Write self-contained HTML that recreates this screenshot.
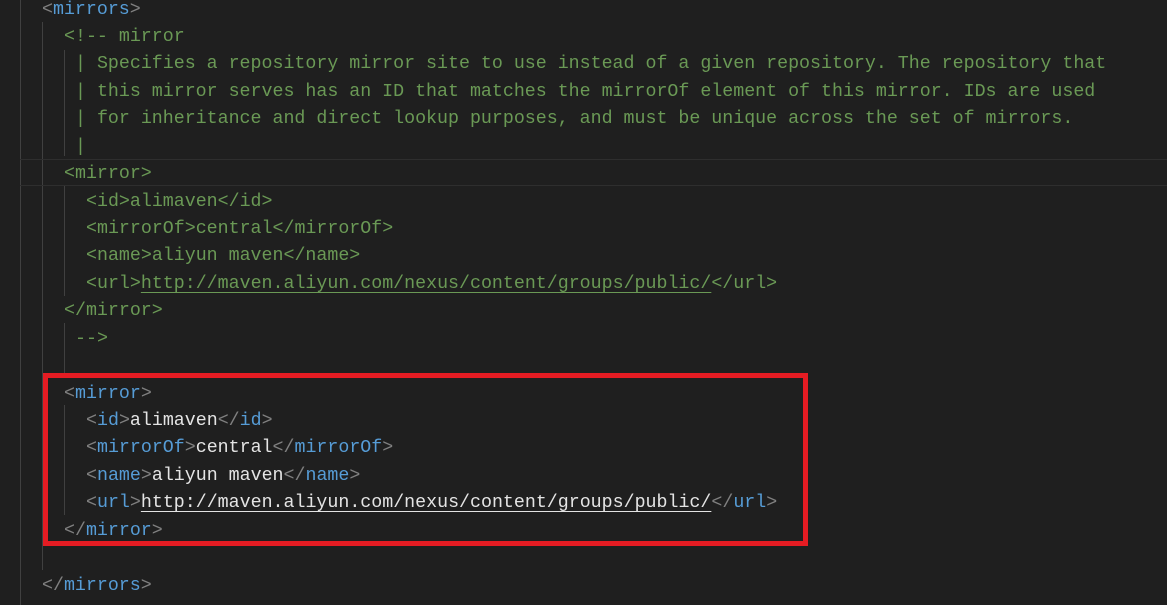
<!DOCTYPE html>
<html><head><meta charset="utf-8"><style>
html,body{margin:0;padding:0;background:#1f1f1f;width:1167px;height:605px;overflow:hidden;position:relative}
.l{position:absolute;white-space:pre;font-family:"Liberation Mono",monospace;font-size:18.3px;line-height:27.43px;height:27.43px;color:#e4e4e4;margin-top:2.5px}
.g{color:#6a9955}.b{color:#808080}.t{color:#569cd6}
.u{text-decoration:underline;text-underline-offset:4px}
.v{position:absolute;width:1px;background:#404040}
</style></head><body>
<div class="v" style="left:20px;top:0;height:605px"></div>
<div class="v" style="left:42px;top:22px;height:548px"></div>
<div class="v" style="left:64px;top:50px;height:106px"></div>
<div class="v" style="left:64px;top:186px;height:110px"></div>
<div class="v" style="left:64px;top:323px;height:52px"></div>
<div class="v" style="left:64px;top:405px;height:110px"></div>
<div style="position:absolute;left:20px;top:159px;width:1147px;height:25px;border-top:1px solid #2e2e2e;border-bottom:1px solid #2e2e2e"></div>

<div class="l" style="left:42px;top:-6px"><span class="b">&lt;</span><span class="t">mirrors</span><span class="b">&gt;</span></div>
<div class="l g" style="left:64px;top:21.4px">&lt;!-- mirror</div>
<div class="l g" style="left:75px;top:48.9px">| Specifies a repository mirror site to use instead of a given repository. The repository that</div>
<div class="l g" style="left:75px;top:76.3px">| this mirror serves has an ID that matches the mirrorOf element of this mirror. IDs are used</div>
<div class="l g" style="left:75px;top:103.7px">| for inheritance and direct lookup purposes, and must be unique across the set of mirrors.</div>
<div class="l g" style="left:75px;top:131.2px">|</div>
<div class="l g" style="left:64px;top:158.6px">&lt;mirror&gt;</div>
<div class="l g" style="left:86px;top:186px">&lt;id&gt;alimaven&lt;/id&gt;</div>
<div class="l g" style="left:86px;top:213.4px">&lt;mirrorOf&gt;central&lt;/mirrorOf&gt;</div>
<div class="l g" style="left:86px;top:240.9px">&lt;name&gt;aliyun maven&lt;/name&gt;</div>
<div class="l g" style="left:86px;top:268.3px">&lt;url&gt;<span class="u">http://maven.aliyun.com/nexus/content/groups/public/</span>&lt;/url&gt;</div>
<div class="l g" style="left:64px;top:295.7px">&lt;/mirror&gt;</div>
<div class="l g" style="left:75px;top:323.2px">--&gt;</div>

<div class="l" style="left:64px;top:378px"><span class="b">&lt;</span><span class="t">mirror</span><span class="b">&gt;</span></div>
<div class="l" style="left:86px;top:405.5px"><span class="b">&lt;</span><span class="t">id</span><span class="b">&gt;</span>alimaven<span class="b">&lt;/</span><span class="t">id</span><span class="b">&gt;</span></div>
<div class="l" style="left:86px;top:432.9px"><span class="b">&lt;</span><span class="t">mirrorOf</span><span class="b">&gt;</span>central<span class="b">&lt;/</span><span class="t">mirrorOf</span><span class="b">&gt;</span></div>
<div class="l" style="left:86px;top:460.3px"><span class="b">&lt;</span><span class="t">name</span><span class="b">&gt;</span>aliyun maven<span class="b">&lt;/</span><span class="t">name</span><span class="b">&gt;</span></div>
<div class="l" style="left:86px;top:487.7px"><span class="b">&lt;</span><span class="t">url</span><span class="b">&gt;</span><span class="u">http://maven.aliyun.com/nexus/content/groups/public/</span><span class="b">&lt;/</span><span class="t">url</span><span class="b">&gt;</span></div>
<div class="l" style="left:64px;top:515.2px"><span class="b">&lt;/</span><span class="t">mirror</span><span class="b">&gt;</span></div>
<div class="l" style="left:42px;top:570px"><span class="b">&lt;/</span><span class="t">mirrors</span><span class="b">&gt;</span></div>

<div style="position:absolute;left:43px;top:373px;width:755px;height:163px;border:5px solid #e51c23"></div>
</body></html>
